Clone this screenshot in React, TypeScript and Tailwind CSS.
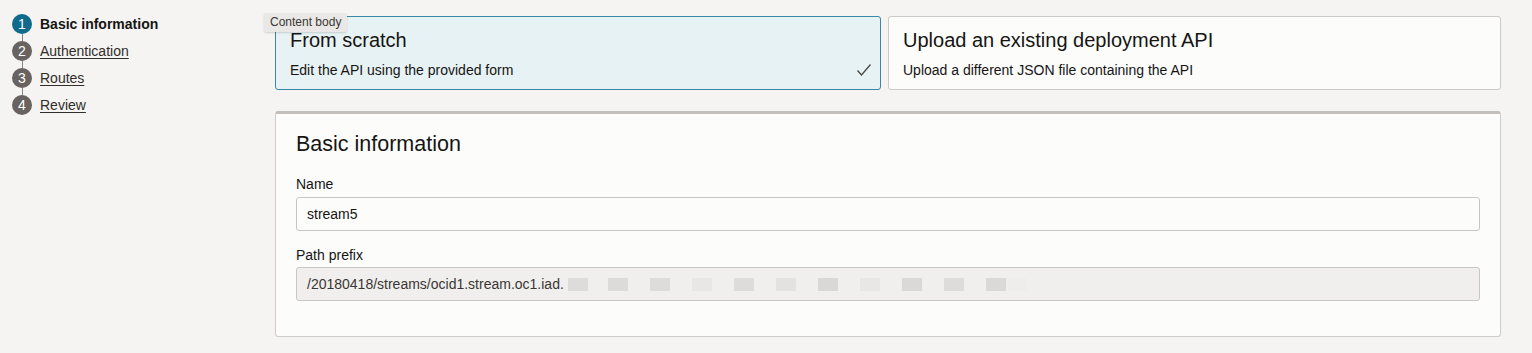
import React from "react";

const steps = [
  { n: 1, label: "Basic information", active: true },
  { n: 2, label: "Authentication" },
  { n: 3, label: "Routes" },
  { n: 4, label: "Review" },
];

const blocks: { x: number; c: string }[] = [
  { x: 0, c: "#dddcda" },
  { x: 40, c: "#dcdbd9" },
  { x: 82, c: "#dddcda" },
  { x: 124, c: "#e8e7e5" },
  { x: 166, c: "#dddcda" },
  { x: 208, c: "#e3e2e0" },
  { x: 250, c: "#d9d8d6" },
  { x: 292, c: "#e8e7e5" },
  { x: 334, c: "#dad9d7" },
  { x: 376, c: "#dddcda" },
  { x: 418, c: "#dad9d7" },
  { x: 439, c: "#eeedeb" },
];

export default function App() {
  return (
    <div
      className="w-[1532px] h-[353px] bg-[#f5f4f2] text-[#161513] flex overflow-hidden"
      style={{ fontFamily: '"Liberation Sans", Arial, sans-serif' }}
    >
      {/* Stepper */}
      <div className="w-[275px] shrink-0 pl-[12px] pt-[14px]">
        {steps.map((s, i) => (
          <div key={s.n} className="flex flex-col">
            <div className="flex items-center h-[20px]">
              <div
                className={
                  "w-[20px] h-[20px] rounded-full flex items-center justify-center text-white text-[14px] shrink-0 " +
                  (s.active ? "bg-[#0f6a8c]" : "bg-[#686260]")
                }
              >
                {s.n}
              </div>
              <span
                className={
                  "ml-[8px] text-[14px] leading-none " +
                  (s.active ? "font-bold" : "underline underline-offset-2 text-[#312d2a]")
                }
              >
                {s.label}
              </span>
            </div>
            {i < steps.length - 1 && (
              <div className="ml-[9.5px] w-px h-[7px] bg-[#8a8580]" />
            )}
          </div>
        ))}
      </div>

      {/* Main */}
      <div className="w-[1226px] shrink-0 pt-[16px]">
        <div className="flex gap-[7px] h-[74px]">
          <div className="relative w-[606px] shrink-0 bg-[#e7f2f5] border border-[#3a86a5] rounded-[3px] pl-[14px] pt-[10px]">
            <div className="text-[20px] leading-[26px]">From scratch</div>
            <div className="text-[14px] leading-[18px] mt-[8px]">Edit the API using the provided form</div>
            <svg
              className="absolute right-[8px] bottom-[12px]"
              width="16"
              height="14"
              viewBox="0 0 16 14"
              fill="none"
            >
              <path d="M1.5 7.5 L5.5 12 L14.5 1.5" stroke="#4a4643" strokeWidth="1.3" />
            </svg>
            <div className="absolute left-[-12px] top-[-4px] bg-[#e9e8e6] text-[#3a3633] text-[12px] leading-[19px] px-[6px] rounded-[2px] shadow-[0_1px_2px_rgba(0,0,0,0.15)]">
              Content body
            </div>
          </div>
          <div className="flex-1 bg-[#fcfcfb] border border-[#cdcac6] rounded-[3px] pl-[14px] pt-[10px]">
            <div className="text-[20px] leading-[26px]">Upload an existing deployment API</div>
            <div className="text-[14px] leading-[18px] mt-[8px]">Upload a different JSON file containing the API</div>
          </div>
        </div>

        <div className="mt-[21px] h-[226px] bg-[#fcfcfb] border border-[#d0cdc9] border-t-[3px] border-t-[#c3c0bb] rounded-[3px] px-[20px] pt-[16px]">
          <div className="text-[21.5px] leading-[28px]">Basic information</div>
          <div className="text-[14px] leading-[18px] mt-[17px]">Name</div>
          <div className="mt-[4px] h-[34px] border border-[#c9c6c2] rounded-[3px] bg-[#fcfcfb] flex items-center px-[10px] text-[14px]">
            stream5
          </div>
          <div className="text-[14px] leading-[18px] mt-[15px]">Path prefix</div>
          <div className="mt-[3px] h-[34px] border border-[#c9c6c2] rounded-[3px] bg-[#f0efed] flex items-center px-[10px] text-[14px] text-[#3a3633]">
            <span>/20180418/streams/ocid1.stream.oc1.iad.</span>
            <div className="relative h-[13px] w-[460px] ml-[4px]">
              {blocks.map((b, i) => (
                <div
                  key={i}
                  className="absolute top-0 h-[13px] w-[20px]"
                  style={{ left: b.x, backgroundColor: b.c }}
                />
              ))}
            </div>
          </div>
        </div>
      </div>
    </div>
  );
}
